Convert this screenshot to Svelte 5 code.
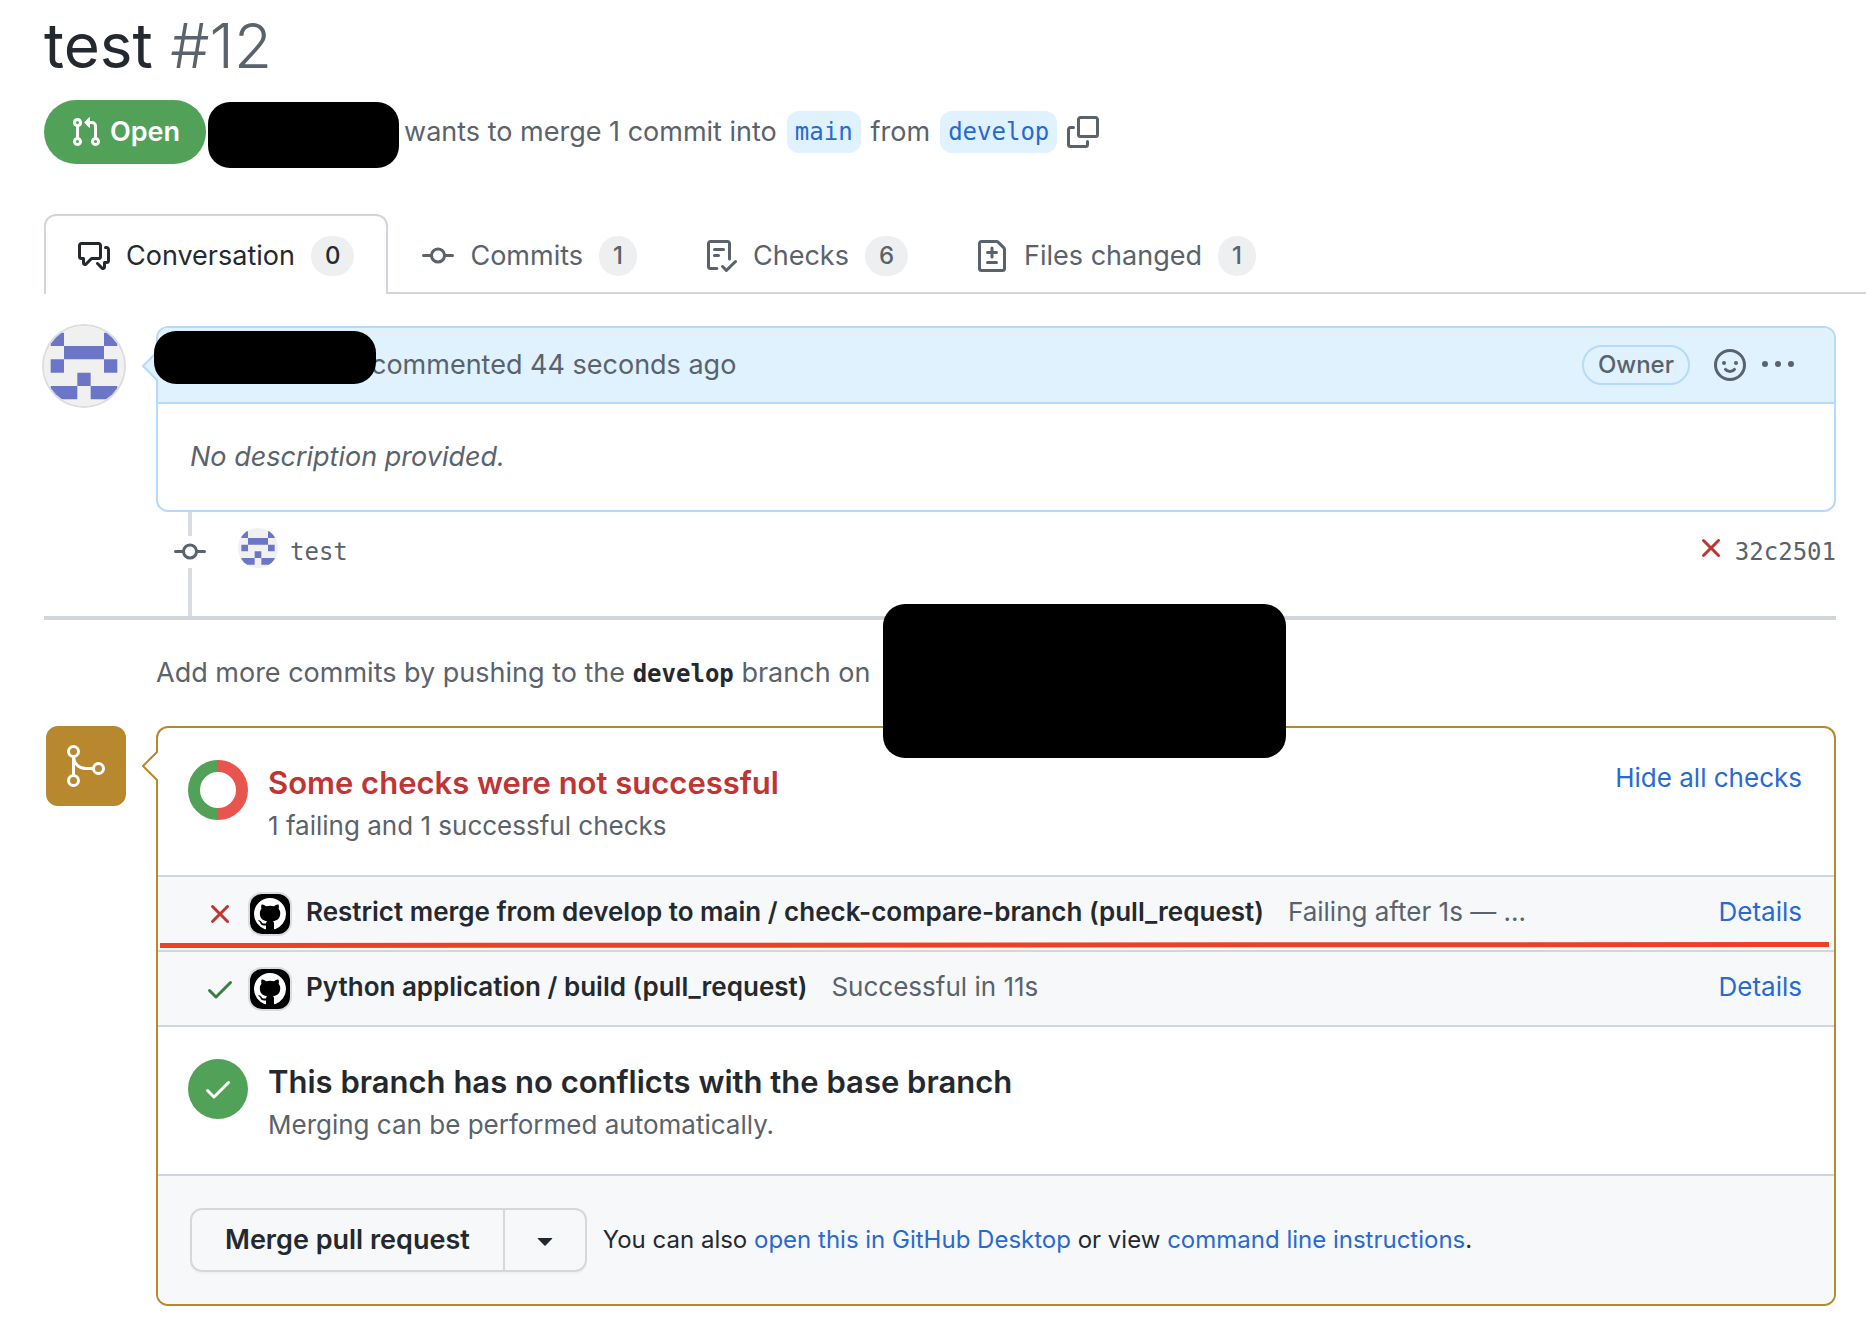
<script lang="ts">
	interface Tab {
		label: string;
		count: number;
		icon: string;
		active?: boolean;
	}

	interface Check {
		name: string;
		status: string;
		ok: boolean;
	}

	const icons: Record<string, string> = {
		pullRequest:
			'M1.5 3.25a2.25 2.25 0 1 1 3 2.122v5.256a2.251 2.251 0 1 1-1.5 0V5.372A2.25 2.25 0 0 1 1.5 3.25Zm5.677-.177L9.573.677A.25.25 0 0 1 10 .854V2.5h1A2.5 2.5 0 0 1 13.5 5v5.628a2.251 2.251 0 1 1-1.5 0V5a1 1 0 0 0-1-1h-1v1.646a.25.25 0 0 1-.427.177L7.177 3.427a.25.25 0 0 1 0-.354ZM3.75 2.5a.75.75 0 1 0 0 1.5.75.75 0 0 0 0-1.5Zm0 9.5a.75.75 0 1 0 0 1.5.75.75 0 0 0 0-1.5Zm8.25.75a.75.75 0 1 0 1.5 0 .75.75 0 0 0-1.5 0Z',
		discussion:
			'M1.75 1h8.5c.966 0 1.75.784 1.75 1.75v5.5A1.75 1.75 0 0 1 10.25 10H7.061l-2.574 2.573A1.458 1.458 0 0 1 2 11.543V10h-.25A1.75 1.75 0 0 1 0 8.25v-5.5C0 1.784.784 1 1.75 1ZM1.5 2.75v5.5c0 .138.112.25.25.25h1a.75.75 0 0 1 .75.75v2.19l2.72-2.72a.749.749 0 0 1 .53-.22h3.5a.25.25 0 0 0 .25-.25v-5.5a.25.25 0 0 0-.25-.25h-8.5a.25.25 0 0 0-.25.25Zm13 2a.25.25 0 0 0-.25-.25h-.5a.75.75 0 0 1 0-1.5h.5c.966 0 1.75.784 1.75 1.75v5.5A1.75 1.75 0 0 1 14.25 12H14v1.543a1.458 1.458 0 0 1-2.487 1.03L9.22 12.28a.749.749 0 0 1 .326-1.275.749.749 0 0 1 .734.215l2.22 2.22v-2.19a.75.75 0 0 1 .75-.75h1a.25.25 0 0 0 .25-.25Z',
		commit:
			'M11.93 8.5a4.002 4.002 0 0 1-7.86 0H.75a.75.75 0 0 1 0-1.5h3.32a4.002 4.002 0 0 1 7.86 0h3.32a.75.75 0 0 1 0 1.5Zm-1.43-.75a2.5 2.5 0 1 0-5 0 2.5 2.5 0 0 0 5 0Z',
		checklist:
			'M2.5 1.75v11.5c0 .138.112.25.25.25h3.17a.75.75 0 0 1 0 1.5H2.75A1.75 1.75 0 0 1 1 13.25V1.75C1 .784 1.784 0 2.75 0h8.5C12.216 0 13 .784 13 1.75v7.736a.75.75 0 0 1-1.5 0V1.75a.25.25 0 0 0-.25-.25h-8.5a.25.25 0 0 0-.25.25Zm13.274 9.537-4.557 4.45a.75.75 0 0 1-1.055-.008l-1.943-1.95a.75.75 0 0 1 1.062-1.058l1.419 1.425 4.026-3.932a.75.75 0 1 1 1.048 1.074ZM4.75 4h4.5a.75.75 0 0 1 0 1.5h-4.5a.75.75 0 0 1 0-1.5ZM4 7.75A.75.75 0 0 1 4.75 7h2a.75.75 0 0 1 0 1.5h-2A.75.75 0 0 1 4 7.75Z',
		fileDiff:
			'M1 1.75C1 .784 1.784 0 2.75 0h7.586c.464 0 .909.184 1.237.513l2.914 2.914c.329.328.513.773.513 1.237v9.586A1.75 1.75 0 0 1 13.25 16H2.75A1.75 1.75 0 0 1 1 14.25Zm1.75-.25a.25.25 0 0 0-.25.25v12.5c0 .138.112.25.25.25h10.5a.25.25 0 0 0 .25-.25V4.664a.25.25 0 0 0-.073-.177l-2.914-2.914a.25.25 0 0 0-.177-.073ZM8 3.25a.75.75 0 0 1 .75.75v1.5h1.5a.75.75 0 0 1 0 1.5h-1.5v1.5a.75.75 0 0 1-1.5 0V7h-1.5a.75.75 0 0 1 0-1.5h1.5V4A.75.75 0 0 1 8 3.25Zm-3 8a.75.75 0 0 1 .75-.75h4.5a.75.75 0 0 1 0 1.5h-4.5a.75.75 0 0 1-.75-.75Z',
		copy: 'M0 6.75C0 5.784.784 5 1.75 5h1.5a.75.75 0 0 1 0 1.5h-1.5a.25.25 0 0 0-.25.25v7.5c0 .138.112.25.25.25h7.5a.25.25 0 0 0 .25-.25v-1.5a.75.75 0 0 1 1.5 0v1.5A1.75 1.75 0 0 1 9.25 16h-7.5A1.75 1.75 0 0 1 0 14.25ZM5 1.75C5 .784 5.784 0 6.75 0h7.5C15.216 0 16 .784 16 1.75v7.5A1.75 1.75 0 0 1 14.25 11h-7.5A1.75 1.75 0 0 1 5 9.25Zm1.75-.25a.25.25 0 0 0-.25.25v7.5c0 .138.112.25.25.25h7.5a.25.25 0 0 0 .25-.25v-7.5a.25.25 0 0 0-.25-.25Z',
		kebab:
			'M0 7.5a1.5 1.5 0 1 1 3 0 1.5 1.5 0 0 1-3 0Zm6.5 0a1.5 1.5 0 1 1 3 0 1.5 1.5 0 0 1-3 0Zm6.5 0a1.5 1.5 0 1 1 3 0 1.5 1.5 0 0 1-3 0Z',
		x: 'M3.72 3.72a.75.75 0 0 1 1.06 0L8 6.94l3.22-3.22a.749.749 0 0 1 1.275.326.749.749 0 0 1-.215.734L9.06 8l3.22 3.22a.749.749 0 0 1-.326 1.275.749.749 0 0 1-.734-.215L8 9.06l-3.22 3.22a.751.751 0 0 1-1.042-.018.751.751 0 0 1-.018-1.042L6.94 8 3.72 4.78a.75.75 0 0 1 0-1.06Z',
		check:
			'M13.78 4.22a.75.75 0 0 1 0 1.06l-7.25 7.25a.75.75 0 0 1-1.06 0L2.22 9.28a.751.751 0 0 1 .018-1.042.751.751 0 0 1 1.042-.018L6 10.94l6.72-6.72a.75.75 0 0 1 1.06 0Z',
		caret:
			'm4.427 7.427 3.396 3.396a.25.25 0 0 0 .354 0l3.396-3.396A.25.25 0 0 0 11.396 7H4.604a.25.25 0 0 0-.177.427Z',
		github:
			'M8 0c4.42 0 8 3.58 8 8a8.013 8.013 0 0 1-5.45 7.59c-.4.08-.55-.17-.55-.38 0-.27.01-1.13.01-2.2 0-.75-.25-1.23-.54-1.48 1.78-.2 3.65-.88 3.65-3.95 0-.88-.31-1.59-.82-2.15.08-.2.36-1.02-.08-2.12 0 0-.67-.22-2.2.82-.64-.18-1.32-.27-2-.27-.68 0-1.36.09-2 .27-1.53-1.03-2.2-.82-2.2-.82-.44 1.1-.16 1.92-.08 2.12-.51.56-.82 1.28-.82 2.15 0 3.06 1.86 3.75 3.64 3.95-.23.2-.44.55-.51 1.07-.46.21-1.61.55-2.33-.66-.15-.24-.6-.83-1.23-.82-.67.01-.27.38.01.53.34.19.73.9.82 1.13.16.45.68 1.31 2.69.94 0 .67.01 1.3.01 1.49 0 .21-.15.45-.55.38A7.995 7.995 0 0 1 0 8c0-4.42 3.58-8 8-8Z'
	};

	const tabs: Tab[] = [
		{ label: 'Conversation', count: 0, icon: 'discussion', active: true },
		{ label: 'Commits', count: 1, icon: 'commit' },
		{ label: 'Checks', count: 6, icon: 'checklist' },
		{ label: 'Files changed', count: 1, icon: 'fileDiff' }
	];

	const checks: Check[] = [
		{
			name: 'Restrict merge from develop to main / check-compare-branch (pull_request)',
			status: 'Failing after 1s — ...',
			ok: false
		},
		{
			name: 'Python application / build (pull_request)',
			status: 'Successful in 11s',
			ok: true
		}
	];

	// filled cells of the 5x5 identicon, as [column, row]
	const cells = [
		[0, 0], [4, 0],
		[1, 1], [2, 1], [3, 1],
		[0, 2], [4, 2],
		[2, 3],
		[0, 4], [1, 4], [3, 4], [4, 4]
	];
	const identiconPath = cells.map(([col, row]) => `M${1 + col * 2} ${1 + row * 2}h2v2h-2z`).join('');
</script>

{#snippet icon(name: string)}
	<svg class="icon" viewBox="0 0 16 16" aria-hidden="true"><path d={icons[name]} /></svg>
{/snippet}

{#snippet identicon()}
	<svg viewBox="0 0 12 12" aria-hidden="true">
		<rect width="12" height="12" fill="#f0f0f0" />
		<path d={identiconPath} fill="#6b76c6" />
	</svg>
{/snippet}

<main class="page">
	<header>
		<h1>test <span class="number">#12</span></h1>
		<div class="meta">
			<span class="state">{@render icon('pullRequest')}Open</span>
			<span class="redacted author"></span>
			<span class="summary">wants to merge 1 commit into</span>
			<a class="branch" href="#main">main</a>
			<span class="summary">from</span>
			<a class="branch" href="#develop">develop</a>
			<button class="plain" aria-label="Copy branch name">{@render icon('copy')}</button>
		</div>
	</header>

	<nav class="tabs">
		{#each tabs as tab}
			<a class="tab" class:active={tab.active} href="#tab">
				{@render icon(tab.icon)}
				<span>{tab.label}</span>
				<span class="counter">{tab.count}</span>
			</a>
		{/each}
	</nav>

	<div class="discussion">
		<section class="entry">
			<div class="avatar">{@render identicon()}</div>
			<article class="box comment">
				<svg class="pointer" viewBox="0 0 16 32" aria-hidden="true">
					<path d="M16 1 1 16l15 15" />
				</svg>
				<div class="comment-head">
					<span class="redacted commenter"></span>
					<span class="when">commented 44 seconds ago</span>
					<span class="role">Owner</span>
					<button class="plain" aria-label="Add reaction">
						<svg class="icon" viewBox="0 0 16 16" aria-hidden="true">
							<circle class="stroke" cx="8" cy="8" r="7.25" />
							<circle cx="5" cy="7" r="1" />
							<circle cx="11" cy="7" r="1" />
							<path class="stroke" d="M5.75 10.2c.5.7 1.3 1.05 2.25 1.05s1.75-.35 2.25-1.05" />
						</svg>
					</button>
					<button class="plain" aria-label="Show options">{@render icon('kebab')}</button>
				</div>
				<p class="comment-body">No description provided.</p>
			</article>
		</section>

		<div class="commit">
			<span class="node">{@render icon('commit')}</span>
			<span class="small-avatar">{@render identicon()}</span>
			<a class="mono message" href="#commit">test</a>
			<span class="fail">{@render icon('x')}</span>
			<a class="mono" href="#commit">32c2501</a>
		</div>

		<div class="push-hint">
			<p>
				Add more commits by pushing to the <strong>develop</strong> branch on
				<span class="redacted repo"></span>
			</p>
		</div>

		<section class="entry">
			<div class="merge-badge">
				<svg viewBox="0 0 24 24" aria-hidden="true">
					<circle cx="5.75" cy="4.75" r="2.5" />
					<circle cx="5.75" cy="19.25" r="2.5" />
					<circle cx="18.25" cy="13.25" r="2.5" />
					<path d="M5.75 7.25v9.5M5.75 7.25a6 6 0 0 0 6 6h4" />
				</svg>
			</div>
			<div class="box merge">
				<svg class="pointer" viewBox="0 0 16 32" aria-hidden="true">
					<path d="M16 1 1 16l15 15" />
				</svg>
				<div class="status">
					<svg class="donut" viewBox="0 0 60 60" aria-hidden="true">
						<path d="M30 6a24 24 0 0 1 0 48" stroke="#e8554f" />
						<path d="M30 6a24 24 0 0 0 0 48" stroke="#52a158" />
					</svg>
					<div class="status-text">
						<h2 class="danger">Some checks were not successful</h2>
						<p>1 failing and 1 successful checks</p>
					</div>
					<button class="plain toggle">Hide all checks</button>
				</div>

				<ul class="checks">
					{#each checks as check}
						<li>
							<span class={check.ok ? 'pass' : 'fail'}>
								{@render icon(check.ok ? 'check' : 'x')}
							</span>
							<span class="app">{@render icon('github')}</span>
							<div class="check-text">
								<strong>{check.name}</strong>
								<span class="result">{check.status}</span>
								<a href="#details">Details</a>
							</div>
							{#if !check.ok}
								<svg class="underline" viewBox="0 0 100 6" preserveAspectRatio="none" aria-hidden="true">
									<path d="M0 1 100 0v5L0 6z" />
								</svg>
							{/if}
						</li>
					{/each}
				</ul>

				<div class="status">
					<span class="success">{@render icon('check')}</span>
					<div class="status-text">
						<h2>This branch has no conflicts with the base branch</h2>
						<p>Merging can be performed automatically.</p>
					</div>
				</div>

				<div class="actions">
					<div class="group">
						<button>Merge pull request</button>
						<button class="more" aria-label="Select merge method">{@render icon('caret')}</button>
					</div>
					<p>
						You can also <a href="#desktop">open this in GitHub Desktop</a> or view
						<a href="#cli">command line instructions</a>.
					</p>
				</div>
			</div>
		</section>
	</div>
</main>

<style>
	:global(body) {
		margin: 0;
		background: #fff;
	}
	.page {
		--fg: #24292f;
		--muted: #5a626c;
		--link: #2869d4;
		--border: #d1d6dd;
		--blue-border: #b6dafb;
		--attention: #b7882d;
		--green: #52a158;
		--mono: 'DejaVu Sans Mono', monospace;
		padding: 0 0 28px 44px;
		color: var(--fg);
		font-family: Inter, sans-serif;
		font-size: 27px;
		line-height: 42px;
	}
	h1,
	h2,
	p,
	ul {
		margin: 0;
		padding: 0;
	}
	a {
		color: var(--link);
		text-decoration: none;
	}
	button {
		font: inherit;
		color: inherit;
		cursor: pointer;
	}
	.plain {
		display: flex;
		padding: 0;
		border: 0;
		background: none;
		color: var(--muted);
	}
	.icon {
		display: block;
		flex-shrink: 0;
		width: 32px;
		height: 32px;
		fill: currentColor;
	}
	.icon .stroke {
		fill: none;
		stroke: currentColor;
		stroke-width: 1.5;
		stroke-linecap: round;
	}
	.redacted {
		background: #000;
		border-radius: 22px;
	}

	h1 {
		padding: 6px 0 14px;
		font-size: 62px;
		font-weight: 400;
		line-height: 80px;
	}
	.number {
		color: var(--muted);
		font-weight: 300;
	}
	.meta {
		display: flex;
		align-items: center;
		height: 64px;
		color: var(--muted);
	}
	.state {
		display: flex;
		align-items: center;
		gap: 8px;
		height: 64px;
		padding: 0 26px;
		border-radius: 32px;
		background: var(--green);
		color: #fff;
		font-weight: 600;
	}
	.author {
		width: 191px;
		height: 66px;
		margin: 6px 5px 0 2px;
	}
	.branch {
		height: 42px;
		margin: 0 10px;
		padding: 0 8px;
		border-radius: 12px;
		background: #dff2fe;
		font-family: var(--mono);
		font-size: 24px;
	}

	.tabs {
		display: flex;
		margin-top: 50px;
		border-bottom: 2px solid var(--border);
	}
	.tab {
		display: flex;
		align-items: center;
		gap: 16px;
		margin-bottom: -2px;
		padding: 20px 32px 18px;
		border: 2px solid transparent;
		border-bottom: 0;
		color: var(--muted);
		line-height: 40px;
	}
	.tab.active {
		border-color: var(--border);
		border-radius: 12px 12px 0 0;
		background: #fff;
		color: var(--fg);
	}
	.counter {
		padding: 0 14px;
		border-radius: 20px;
		background: #eeeff1;
		font-size: 24px;
		font-weight: 500;
		text-align: center;
	}

	.discussion {
		padding: 32px 30px 0 0;
	}
	.entry {
		display: grid;
		grid-template-columns: 82px 1fr;
		gap: 30px;
		align-items: start;
	}
	.avatar,
	.small-avatar {
		overflow: hidden;
		border-radius: 50%;
	}
	.avatar svg,
	.small-avatar svg {
		display: block;
	}
	.avatar {
		width: 80px;
		height: 80px;
		box-shadow: 0 0 0 2px #dcdddf;
	}
	.small-avatar {
		width: 40px;
		height: 40px;
	}
	.box {
		position: relative;
		border: 2px solid;
		border-radius: 12px;
	}
	.pointer {
		position: absolute;
		top: 22px;
		left: -16px;
		width: 16px;
		height: 32px;
		fill: #fff;
		stroke: var(--attention);
		stroke-width: 2;
	}
	.comment {
		border-color: var(--blue-border);
	}
	.comment .pointer {
		fill: #dff2fe;
		stroke: var(--blue-border);
	}
	.comment-head {
		display: flex;
		align-items: center;
		gap: 16px;
		height: 74px;
		padding: 0 40px 0 213px;
		border-bottom: 2px solid var(--blue-border);
		border-radius: 10px 10px 0 0;
		background: #dff2fe;
		color: var(--muted);
	}
	.commenter {
		position: absolute;
		top: 3px;
		left: -4px;
		width: 222px;
		height: 53px;
	}
	.when {
		flex: 1;
	}
	.role {
		margin-right: 8px;
		padding: 0 14px;
		border: 2px solid var(--blue-border);
		border-radius: 20px;
		font-size: 24px;
		font-weight: 500;
		line-height: 36px;
	}
	.comment-body {
		padding: 32px;
		color: var(--muted);
		font-style: italic;
	}

	.commit {
		position: relative;
		display: flex;
		align-items: center;
		margin-left: 130px;
		padding: 16px 0 48px;
	}
	.commit::before {
		content: '';
		position: absolute;
		top: 0;
		bottom: 0;
		left: 14px;
		width: 4px;
		background: #d9dde1;
	}
	.node {
		position: relative;
		align-self: flex-end;
		margin-right: 32px;
		background: #fff;
		color: var(--muted);
	}
	.mono {
		align-self: flex-end;
		color: var(--muted);
		font-family: var(--mono);
		font-size: 24px;
		line-height: 32px;
	}
	.message {
		flex: 1;
		margin-left: 12px;
	}
	.commit .fail {
		margin-right: 8px;
	}
	.fail {
		color: #c03434;
	}
	.pass {
		color: #3a7d3e;
	}

	.push-hint {
		padding: 32px 0 32px 112px;
		border-top: 4px solid var(--border);
		color: var(--muted);
	}
	.push-hint strong {
		color: var(--fg);
		font-family: var(--mono);
		font-size: 24px;
		line-height: 24px;
	}
	.push-hint p {
		position: relative;
		width: fit-content;
	}
	.repo {
		position: absolute;
		top: -48px;
		left: calc(100% + 13px);
		z-index: 1;
		width: 403px;
		height: 154px;
	}

	.merge-badge {
		display: grid;
		place-items: center;
		justify-self: end;
		width: 80px;
		height: 80px;
		border-radius: 12px;
		background: var(--attention);
	}
	.merge-badge svg {
		width: 48px;
		height: 48px;
		fill: none;
		stroke: #fff;
		stroke-width: 1.5;
	}
	.merge {
		border-color: var(--attention);
	}
	.status {
		display: flex;
		align-items: flex-start;
		gap: 20px;
		padding: 32px 32px 28px 30px;
	}
	.donut {
		width: 60px;
		height: 60px;
		fill: none;
		stroke-width: 12;
	}
	.success {
		display: grid;
		place-items: center;
		width: 60px;
		height: 60px;
		border-radius: 50%;
		background: var(--green);
		color: #fff;
	}
	.status-text {
		flex: 1;
	}
	h2 {
		font-size: 31px;
		font-weight: 600;
		line-height: 45px;
	}
	.danger {
		color: #c03434;
	}
	.status p {
		color: var(--muted);
		font-size: 26px;
	}
	.toggle {
		color: var(--link);
		font-size: 26px;
		line-height: 36px;
	}
	.checks {
		border-bottom: 2px solid var(--border);
		list-style: none;
	}
	.checks li {
		position: relative;
		display: flex;
		align-items: center;
		height: 73px;
		padding: 0 32px 0 46px;
		border-top: 2px solid var(--border);
		background: #f6f8fa;
		font-size: 26px;
	}
	.check-text {
		display: flex;
		flex: 1;
		gap: 24px;
		padding-bottom: 4px;
	}
	.checks strong {
		font-weight: 600;
	}
	.app {
		display: grid;
		place-items: center;
		width: 40px;
		height: 40px;
		margin: 0 16px 0 14px;
		border-radius: 12px;
		background: #000;
		box-shadow: 0 0 0 2px #d9dbde;
		color: #fff;
	}
	.result {
		flex: 1;
		color: var(--muted);
	}
	.underline {
		position: absolute;
		bottom: 2px;
		left: 2px;
		width: calc(100% - 7px);
		height: 6px;
		fill: #ee4027;
	}
	.actions {
		display: flex;
		align-items: center;
		gap: 16px;
		padding: 32px;
		border-top: 2px solid var(--border);
		border-radius: 0 0 10px 10px;
		background: #f6f8fa;
		font-size: 24px;
	}
	.group {
		display: flex;
		border: 2px solid #d5d8da;
		border-radius: 12px;
		box-shadow: 0 2px 0 #eef0f2;
	}
	.group button {
		padding: 9px 33px;
		border: 0;
		background: none;
		font-size: 27px;
		font-weight: 600;
	}
	.group .more {
		padding: 9px 24px;
		border-left: 2px solid #d5d8da;
	}
</style>
